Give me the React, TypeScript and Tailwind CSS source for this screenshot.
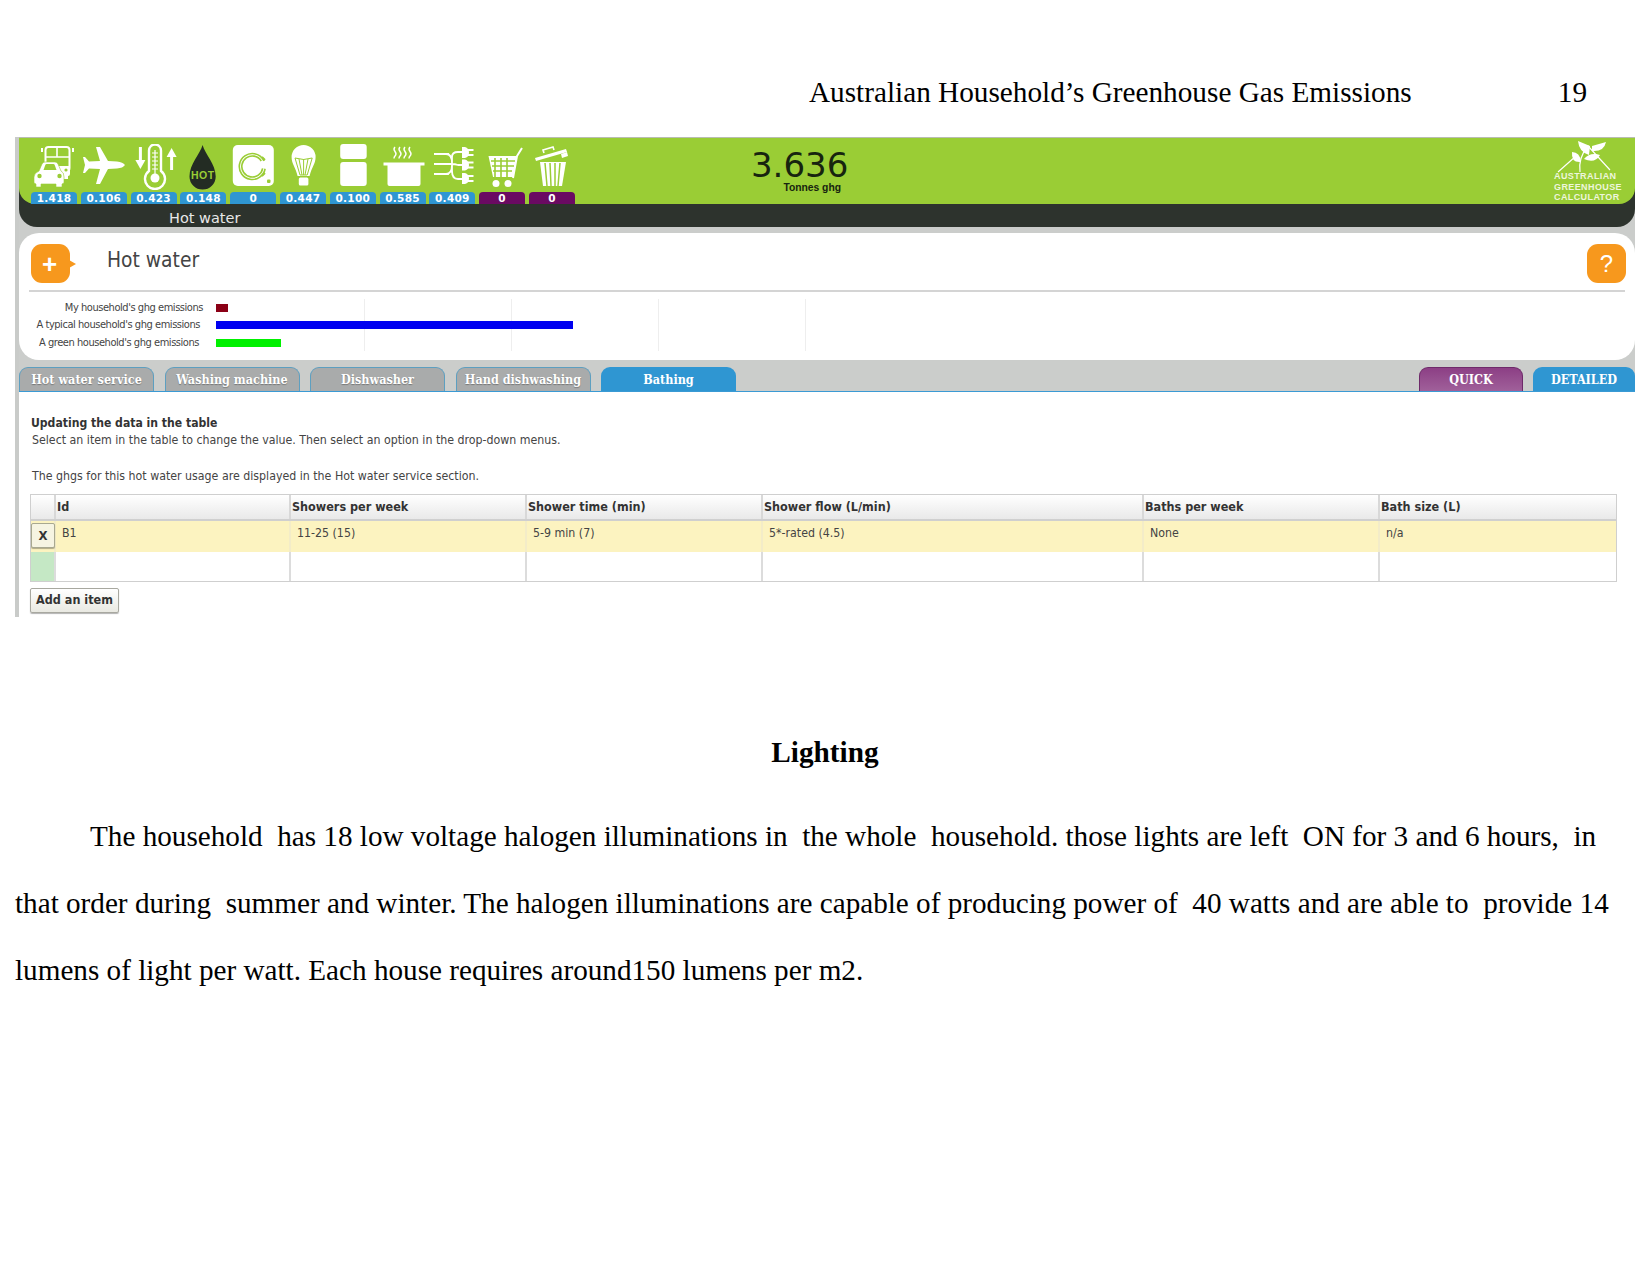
const W = 'white';
const G = '#9acd35';

const CarIcon = () => (
  <svg width="46" height="46" viewBox="0 0 46 46">
    <rect x="14.5" y="3" width="24" height="24" rx="3" fill="none" stroke={W} strokeWidth="2" />
    <path d="M14 13h24M26 3v10" stroke={W} strokeWidth="1.6" />
    <path d="M11 4v4M42 4v4" stroke={W} strokeWidth="2" />
    <path d="M28 22h11v8q0 2-2 2v3h-5v-3h-4z" fill={W} />
    <circle cx="35" cy="26" r="1.6" fill={G} />
    <path d="M3 33q0-4 5-6l3-7q1-2 3-2h10q2 0 3 2l3 7q3 1 3 6v6l-2 1v3h-6v-3H10v3H5v-3l-2-1z" fill={W} stroke={G} strokeWidth=".6" />
    <path d="M12.5 26l2-5.500q.5-.5 1-.5h7q.5 0 1 .5l2 5.500z" fill={G} />
    <circle cx="8.500" cy="32" r="2.200" fill={G} />
    <circle cx="28.500" cy="32" r="2.200" fill={G} />
  </svg>
);

const PlaneIcon = () => (
  <svg width="46" height="46" viewBox="0 0 46 46">
    <path d="M44 21q-2-3-8-3.500L27 17 19 3h-4l4 14-11 .5L4 13H2l2 8-2 8h2l4-4.500 11 .5-4 15h4l8-15 9-.5q6-.5 8-3.500z" fill={W} />
  </svg>
);

const ThermoIcon = () => (
  <svg width="46" height="46" viewBox="0 0 46 46">
    <path d="M9.400 3v15" stroke={W} strokeWidth="3" />
    <path d="M4.400 16h10l-5 9z" fill={W} />
    <path d="M40.600 26V11" stroke={W} strokeWidth="3" />
    <path d="M35.600 13h10l-5-9z" fill={W} />
    <path d="M18 6.500a6 6 0 0 1 12 0V27a10 10 0 1 1-12 0z" fill="none" stroke={W} strokeWidth="2.400" />
    <path d="M21 9h6M21 13h6M21 17h6M21 21h6M21 25h6M24 6v27" stroke={W} strokeWidth="1.200" />
    <circle cx="24" cy="34" r="4.500" fill={W} />
  </svg>
);

const DropIcon = () => (
  <svg width="46" height="47" viewBox="0 0 46 47">
    <path d="M22.600 1C20 10 9.500 20 9.500 32.500a13.100 13.100 0 0 0 26.200 0C35.700 20 25 10 22.600 1z" fill="#232c23" />
    <text x="22.800" y="34.500" textAnchor="middle" fontSize="10.500" fontWeight="700" letterSpacing=".5" fill={G} className="font-['Liberation_Sans',sans-serif]">HOT</text>
  </svg>
);

const WasherIcon = () => (
  <svg width="46" height="46" viewBox="0 0 46 46">
    <rect x="2.800" y="1" width="41" height="41" rx="5" fill={W} />
    <circle cx="22.300" cy="22.500" r="13" fill="none" stroke={G} strokeWidth="1.600" strokeDasharray="73 8.700" transform="rotate(10 22.300 22.500)" />
    <circle cx="22.300" cy="22.500" r="10.500" fill="none" stroke={G} strokeWidth="1.600" strokeDasharray="58 8" transform="rotate(10 22.300 22.500)" />
    <path d="M32 13l3 3M35 29l-3 3" stroke={G} strokeWidth="1.800" />
    <rect x="37" y="35.500" width="3.500" height="3.500" rx="1" fill={G} />
  </svg>
);

const BulbIcon = () => (
  <svg width="46" height="46" viewBox="0 0 46 46">
    <path d="M23.600 1a12 12 0 0 1 12 12c0 7-4 10-6 19h-12c-2-9-6-12-6-19a12 12 0 0 1 12-12z" fill={W} />
    <path d="M15 14q8.600 3 17.200 0l-5 17h-7.200zM23.600 15v16M19 15l3 16M28 15l-3 16" fill="none" stroke={G} strokeWidth="1" />
    <rect x="18.800" y="33.500" width="9.600" height="8" rx="1.500" fill={W} />
  </svg>
);

const FridgeIcon = () => (
  <svg width="46" height="46" viewBox="0 0 46 46">
    <rect x="10.200" y="0" width="26.500" height="15" rx="3" fill={W} />
    <rect x="10.200" y="18" width="26.500" height="24" rx="3" fill={W} />
  </svg>
);

const PotIcon = () => (
  <svg width="46" height="46" viewBox="0 0 46 46">
    <path d="M15 3q-2 2 0 4.500t0 4.500q-1 1-1 2.500M20 3q-2 2 0 4.500t0 4.500q-1 1-1 2.500M25 3q-2 2 0 4.500t0 4.500q-1 1-1 2.500M30 3q-2 2 0 4.500t0 4.500q-1 1-1 2.500" fill="none" stroke={W} strokeWidth="1.400" />
    <rect x="3.500" y="18.500" width="41" height="3" fill={W} />
    <path d="M7.500 20h33v20q0 2-2 2h-29q-2 0-2-2z" fill={W} />
  </svg>
);

const PlugsIcon = () => (
  <svg width="46" height="46" viewBox="0 0 46 46">
    <path d="M5 10h15M5 20h15M5 30h15M17 30q6 0 6-9v-8q0-5 6-5h5M5 20h18q3 0 6 1h5M17 10q6 0 6 9v8q0 8 6 8h5" fill="none" stroke={W} strokeWidth="1.800" />
    <path d="M33 3h3q4 1 4 5.500t-4 5.500h-3zM33 15.500h3q4 1 4 5.500t-4 5.500h-3zM33 29h3q4 1 4 5.500t-4 5.500h-3z" fill={W} />
    <path d="M39 6h5.500M39 11h5.500M39 18.500h5.500M39 23.500h5.500M39 32h5.500M39 37h5.500" stroke={W} strokeWidth="1.800" />
  </svg>
);

const CartIcon = () => (
  <svg width="46" height="46" viewBox="0 0 46 46">
    <path d="M9.500 12h28.500l-4 21H14z" fill={W} />
    <path d="M12 17h24M13 22h22M14 27h19M16 14v19M22 14v19M28 14v19" stroke={G} strokeWidth="1.600" />
    <path d="M34 34l4-22 5-8" fill="none" stroke={W} strokeWidth="2" />
    <circle cx="17" cy="39.500" r="3.500" fill={W} />
    <circle cx="29" cy="39.500" r="3.500" fill={W} />
  </svg>
);

const BinIcon = () => (
  <svg width="46" height="46" viewBox="0 0 46 46">
    <path d="M6 14l31-9 1 3L7 17z" fill={W} />
    <path d="M15 9l-1-3 10-3 1 3" fill="none" stroke={W} strokeWidth="1.600" />
    <path d="M32 10l6-2 1 4-6 2z" fill={W} />
    <path d="M11 18h26l-4 24H14z" fill={W} />
    <path d="M16 19l2 23M21 19l1 23M26 19v23M31 19l-2 23" stroke={G} strokeWidth="1.500" />
  </svg>
);

const items = [
  { icon: <CarIcon />, value: '1.418', purple: false },
  { icon: <PlaneIcon />, value: '0.106', purple: false },
  { icon: <ThermoIcon />, value: '0.423', purple: false },
  { icon: <DropIcon />, value: '0.148', purple: false },
  { icon: <WasherIcon />, value: '0', purple: false },
  { icon: <BulbIcon />, value: '0.447', purple: false },
  { icon: <FridgeIcon />, value: '0.100', purple: false },
  { icon: <PotIcon />, value: '0.585', purple: false },
  { icon: <PlugsIcon />, value: '0.409', purple: false },
  { icon: <CartIcon />, value: '0', purple: true },
  { icon: <BinIcon />, value: '0', purple: true },
];

const chartRows = [
  { label: "My household's ghg emissions", pr: 'pr-[13px]', bar: 'w-[12px] bg-[#8b0016]' },
  { label: "A typical household's ghg emissions", pr: 'pr-[16px]', bar: 'w-[357px] bg-[#0000f0]' },
  { label: "A green household's ghg emissions", pr: 'pr-[17px]', bar: 'w-[65px] bg-[#00f000]' },
];

const tabs = ['Hot water service', 'Washing machine', 'Dishwasher', 'Hand dishwashing'];

const columns = [
  { title: 'Id', value: 'B1' },
  { title: 'Showers per week', value: '11-25 (15)' },
  { title: 'Shower time (min)', value: '5-9 min (7)' },
  { title: 'Shower flow (L/min)', value: '5*-rated (4.5)' },
  { title: 'Baths per week', value: 'None' },
  { title: 'Bath size (L)', value: 'n/a' },
];

const gridCols = 'grid grid-cols-[23px_235px_236px_236px_381px_236px_238px]';

export default function App() {
  return (
    <div className="w-[1650px] h-[1275px] bg-white overflow-hidden font-['Liberation_Serif',serif] text-[29.25px] text-black">
      {/* Page header */}
      <div className="h-[137px] pt-[75px] pr-[63px] flex justify-end gap-[146px] leading-[34px]">
        <span>Australian Household’s Greenhouse Gas Emissions</span>
        <span>19</span>
      </div>

      {/* Calculator screenshot */}
      <div className="ml-[15px] w-[1620px] h-[480px] bg-white font-['DejaVu_Sans_Condensed','DejaVu_Sans',sans-serif] border-l-[4px] border-[#c9cbc9]">
        <div className="bg-[#cbcdcb] pb-[6px]">
          {/* Green bar */}
          <div className="bg-[#2d332d] rounded-b-[18px] h-[90px]">
            <div className="h-[67px] bg-[#9acd35] rounded-b-[16px] border-t border-[#b9bdb2] flex items-end pl-[12px] relative">
              <div className="flex gap-[3.8px]">
                {items.map((item, i) => (
                  <div key={i} className="w-[46px] flex flex-col">
                    <div className="h-[48px]">{item.icon}</div>
                    <div
                      className={`h-[12px] pt-[1px] rounded-t-[4px] flex items-center justify-center text-[10.500px] font-bold tracking-[0.3px] font-['DejaVu_Sans',sans-serif] text-white ${
                        item.purple ? 'bg-[#6a0a62]' : 'bg-[#2f96d2]'
                      }`}
                    >
                      {item.value}
                    </div>
                  </div>
                ))}
              </div>

              {/* Total */}
              <div className="ml-[175px] self-start mt-[9px] text-[#17240f] flex flex-col items-end w-[95px]">
                <span className="text-[34px] leading-[36px] ml-[1px] font-['DejaVu_Sans',sans-serif] self-start">3.636</span>
                <span className="text-[10.300px] leading-[11px] font-bold font-['Liberation_Sans',sans-serif] mr-[4px] -mt-[1px]">Tonnes ghg</span>
              </div>

              {/* Logo */}
              <div className="ml-auto mr-[13px] self-start flex flex-col items-start text-[#eef6dc] font-['Liberation_Sans',sans-serif] font-bold text-[9px] leading-[10.500px] relative">
                <svg width="60" height="36" viewBox="0 0 60 36" className="-mb-[3px] mt-[0px]">
                  <path d="M4 34L22 18M26 34q-2-14 8-26l22 24" fill="none" stroke={W} strokeWidth="1.200" />
                  <path d="M24 3l12 5-1 9q-10-3-11-14zM38 8l14-4q-2 10-14 9zM18 14q8 0 9 10-10 1-9-10zM30 21q6-7 16-4-5 9-16 4z" fill={W} />
                </svg>
                <span className="tracking-[0.4px]">AUSTRALIAN</span>
                <span className="tracking-[0.4px]">GREENHOUSE</span>
                <span className="tracking-[0.4px]">CALCULATOR</span>
              </div>
            </div>
            <div className="h-[23px] pl-[150px] pt-[3px] text-[14.500px] leading-[23px] text-[#e8e8e8] font-['DejaVu_Sans',sans-serif]">Hot water</div>
          </div>
        </div>

        {/* Info panel */}
        <div className="bg-[#cbcdcb] h-[134px]">
          <div className="bg-white h-[127px] rounded-[20px] flex flex-col px-[10px]">
            <div className="h-[59px] border-b-2 border-[#d4d4d4] flex items-start relative">
              <div className="ml-[2px] mt-[11px] w-[39px] h-[39px] rounded-[11px] bg-[#f7981d] flex items-center justify-center text-white text-[26px] leading-none font-['Liberation_Sans',sans-serif] font-bold pr-[2px]">+</div>
              <div className="mt-[27px] -ml-[1px] border-y-[4px] border-y-transparent border-l-[7px] border-l-[#f7981d]" />
              <div className="ml-[31px] mt-[14px] text-[20.800px] leading-[26px] text-[#444]">Hot water</div>
              <div className="ml-auto mr-[-1px] mt-[11px] w-[39px] h-[39px] rounded-[11px] bg-[#f7981d] flex items-center justify-center text-white text-[24px] leading-none font-['Liberation_Sans',sans-serif]">?</div>
            </div>
            <div className="relative mt-[7px]">
              {/* Chart grid lines */}
              <div className="absolute left-[335px] top-0 flex">
                {[0, 1, 2, 3].map(i => (
                  <div key={i} className="w-[147px] h-[52px] border-l border-[#eeeeee]" />
                ))}
              </div>
              <div className="flex flex-col relative">
                {chartRows.map(row => (
                  <div key={row.label} className="flex items-center h-[17.500px]">
                    <div className={`w-[187px] text-right text-[11px] text-[#444] tracking-[-0.45px] whitespace-nowrap ${row.pr}`}>{row.label}</div>
                    <div className={`h-[8px] ${row.bar}`} />
                  </div>
                ))}
              </div>
            </div>
          </div>
        </div>

        {/* Tabs */}
        <div className="bg-[#cbcdcb] h-[25px] flex items-end border-b border-[#3a9ad4] relative">
          <div className="flex gap-[10.500px] h-[24px]">
            {tabs.map(t => (
              <div key={t} className="w-[135px] h-[24px] pt-[1px] rounded-t-[9px] border-x border-t border-[#5d9fc0] bg-[#a9abab] flex items-center justify-center text-white text-[12.500px] font-bold font-['DejaVu_Serif_Condensed','DejaVu_Serif',serif] whitespace-nowrap [text-shadow:0_1px_1px_rgba(0,0,0,.3)]">
                {t}
              </div>
            ))}
            <div className="w-[135px] h-[24px] pt-[3px] rounded-t-[9px] bg-[#2f96d2] flex items-center justify-center text-white text-[12.500px] font-bold font-['DejaVu_Serif_Condensed','DejaVu_Serif',serif]">Bathing</div>
          </div>
          <div className="ml-auto flex gap-[10px] h-[24px]">
            <div className="w-[104px] h-[24px] pt-[1px] rounded-t-[9px] border-x border-t border-[#6e2a6a] bg-gradient-to-b from-[#8c3f85] to-[#a0609a] flex items-center justify-center text-white text-[12.500px] font-bold font-['DejaVu_Serif_Condensed','DejaVu_Serif',serif]">QUICK</div>
            <div className="w-[102px] h-[24px] pt-[3px] rounded-t-[9px] bg-[#2f96d2] flex items-center justify-center text-white text-[12.500px] font-bold font-['DejaVu_Serif_Condensed','DejaVu_Serif',serif]">DETAILED</div>
          </div>
        </div>

        {/* Table section */}
        <div className="pl-[11px] pt-[23px] text-[12.270px] text-[#444]">
          <div className="pl-[1px] font-bold leading-[17px] text-[12.100px] text-[#333]">Updating the data in the table</div>
          <div className="pl-[2px] leading-[17px]">Select an item in the table to change the value. Then select an option in the drop-down menus.</div>
          <div className="pl-[2px] leading-[17px] mt-[19px]">The ghgs for this hot water usage are displayed in the Hot water service section.</div>

          <div className="mt-[9px] w-[1587px] border border-[#cfcfcf]">
            <div className={`${gridCols} h-[26px] bg-gradient-to-b from-white to-[#e9e9e9] border-b-2 border-[#cfcfcf] font-bold text-[12.500px] text-[#333] leading-[24px]`}>
              <div />
              {columns.map(c => (
                <div key={c.title} className="border-l-2 border-[#d8d8d8] pl-[1px] whitespace-nowrap">{c.title}</div>
              ))}
            </div>
            <div className={`${gridCols} h-[31px] bg-[#fcf3c0] leading-[24px]`}>
              <div className="relative">
                <div className="absolute left-0 top-[2px] w-[24px] h-[25px] bg-[#f6f4e2] border border-[#a8a890] rounded-[2px] shadow-[0_1px_1px_rgba(0,0,0,.3)] flex items-center justify-center font-bold text-[13px] text-[#333]">X</div>
              </div>
              {columns.map(c => (
                <div key={c.title} className="border-l-2 border-[#f3ecc8] pl-[6px] whitespace-nowrap">{c.value}</div>
              ))}
            </div>
            <div className={`${gridCols} h-[29px]`}>
              <div className="bg-[#c5e8c5]" />
              {columns.map(c => (
                <div key={c.title} className="border-l-2 border-[#dcdcdc]" />
              ))}
            </div>
          </div>

          <div className="mt-[6px] w-[89px] h-[25px] border border-[#a8a8a0] rounded-[2px] bg-gradient-to-b from-white to-[#e9e9e2] shadow-[0_1px_1px_rgba(0,0,0,.3)] flex items-center justify-center font-bold text-[12.500px] text-[#333]">Add an item</div>
        </div>
      </div>

      {/* Document body */}
      <div className="mt-[102px] text-center font-bold leading-[67px]">Lighting</div>
      <p className="mt-[17px] ml-[15px] w-[1620px] text-[29.18px] leading-[67px] indent-[75px] whitespace-pre-wrap">
        The household  has 18 low voltage halogen illuminations in  the whole  household. those lights are left  ON for 3 and 6 hours,  in that order during  summer and winter. The halogen illuminations are capable of producing power of  40 watts and are able to  provide 14 lumens of light per watt. Each house requires around150 lumens per m2.
      </p>
    </div>
  );
}
